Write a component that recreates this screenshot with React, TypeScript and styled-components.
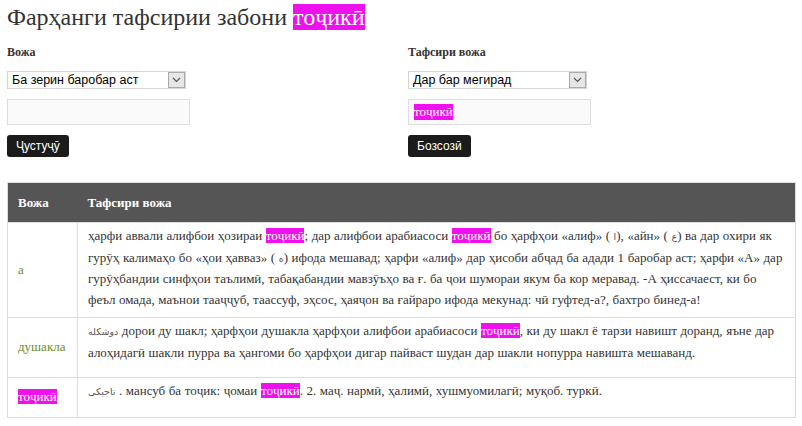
import styled, { createGlobalStyle } from 'styled-components';

const Global = createGlobalStyle`
  body {
    margin: 0;
    background: #fff;
    font-family: 'Liberation Serif', serif;
    color: #333;
  }
`;

const Page = styled.div`
  padding: 3px 6px 8px 7px;
`;

const Title = styled.h1`
  margin: 0;
  font-size: 24px;
  font-weight: normal;
  line-height: 28px;
  color: #333;
`;

const Mark = styled.span`
  background: #ee11ee;
  color: #fff;
`;

const Arabic = styled.span`
  font-family: 'DejaVu Sans', sans-serif;
  font-size: 9.5px;
  color: #555;
`;

const Forms = styled.div`
  display: grid;
  grid-template-columns: 401px 1fr;
  margin-top: 14px;
`;

const Field = styled.div`
  display: flex;
  flex-direction: column;
  align-items: flex-start;
`;

const Label = styled.div`
  font-weight: bold;
  font-size: 12px;
  line-height: 14px;
  color: #333;
  margin-bottom: 12px;
`;

const Select = styled.div`
  box-sizing: border-box;
  width: 179px;
  height: 18px;
  border: 1px solid #d4d4d4;
  display: flex;
  align-items: center;
  justify-content: space-between;
  font-family: 'Liberation Sans', Arial, sans-serif;
  font-size: 12.5px;
  color: #000;
  padding-left: 4px;
`;

const Arrow = styled.div`
  box-sizing: border-box;
  width: 17px;
  height: 16px;
  border: 1px solid #aaa;
  background: #e6e6e6;
  display: flex;
  align-items: center;
  justify-content: center;
`;

const Input = styled.div`
  box-sizing: border-box;
  margin-top: 10px;
  width: 183px;
  height: 26px;
  border: 1px solid #ddd;
  background: #fafafa;
  display: flex;
  align-items: center;
  padding-left: 5px;
  font-size: 13px;
`;

const Button = styled.div`
  margin-top: 10px;
  background: #1b1b1b;
  color: #fff;
  border-radius: 3px;
  font-family: 'Liberation Sans', Arial, sans-serif;
  font-size: 12px;
  padding: 0 9px;
  height: 22px;
  display: flex;
  align-items: center;
`;

const Table = styled.table`
  margin-top: 25px;
  width: 789px;
  border-collapse: collapse;
  border: 1px solid #ddd;
  font-size: 13px;
`;

const Th = styled.th`
  background: #555;
  color: #fff;
  text-align: left;
  font-weight: bold;
  font-size: 13px;
  height: 39px;
  padding: 0 10px;
`;

const Row = styled.tr<{ $h: number }>`
  height: ${({ $h }) => $h}px;
`;

const Td = styled.td<{ $word?: boolean }>`
  border: 1px solid #ddd;
  padding: ${({ $word }) => ($word ? '0 10px' : '3px 9px 4px 10px')};
  vertical-align: ${({ $word }) => ($word ? 'middle' : 'top')};
  line-height: 20.5px;
  word-spacing: ${({ $word }) => ($word ? '0' : '0.3px')};
  color: ${({ $word }) => ($word ? '#6b8e23' : '#333')};
  width: ${({ $word }) => ($word ? '49px' : 'auto')};
`;

const Chevron = () => (
  <svg width="9" height="6" viewBox="0 0 9 6">
    <path d="M1 1l3.5 3.5L8 1" fill="none" stroke="#555" strokeWidth="1.2" />
  </svg>
);

export default function App() {
  return (
    <Page>
      <Global />
      <Title>
        Фарҳанги тафсирии забони <Mark>тоҷикӣ</Mark>
      </Title>
      <Forms>
        <Field>
          <Label>Вожа</Label>
          <Select>
            Ба зерин баробар аст
            <Arrow>
              <Chevron />
            </Arrow>
          </Select>
          <Input />
          <Button>Ҷустуҷӯ</Button>
        </Field>
        <Field>
          <Label>Тафсири вожа</Label>
          <Select>
            Дар бар мегирад
            <Arrow>
              <Chevron />
            </Arrow>
          </Select>
          <Input>
            <Mark>тоҷикӣ</Mark>
          </Input>
          <Button>Бозсозӣ</Button>
        </Field>
      </Forms>
      <Table>
        <thead>
          <tr>
            <Th>Вожа</Th>
            <Th>Тафсири вожа</Th>
          </tr>
        </thead>
        <tbody>
          <Row $h={95}>
            <Td $word>а</Td>
            <Td>
              ҳарфи аввали алифбои ҳозираи <Mark>тоҷикӣ</Mark>; дар алифбои арабиасоси <Mark>тоҷикӣ</Mark> бо
              ҳарфҳои «алиф» ( <Arabic>ا</Arabic>), «айн» ( <Arabic>ع</Arabic>) ва дар охири як гурӯҳ
              калимаҳо бо «ҳои ҳавваз» ( <Arabic>ه</Arabic>) ифода мешавад; ҳарфи «алиф» дар ҳисоби абҷад
              ба адади 1 баробар аст; ҳарфи «А» дар гурӯҳбандии синфҳои таълимӣ, табақабандии мавзӯъҳо ва ғ.
              ба ҷои шумораи якум ба кор меравад. -А ҳиссачаест, ки бо феъл омада, маънои тааҷҷуб, таассуф,
              эҳсос, ҳаяҷон ва ғайраро ифода мекунад: чӣ гуфтед-а?, бахтро бинед-а!
            </Td>
          </Row>
          <Row $h={60}>
            <Td $word>душакла</Td>
            <Td>
              <Arabic>دوشکله</Arabic> дорои ду шакл; ҳарфҳои душакла ҳарфҳои алифбои арабиасоси{' '}
              <Mark>тоҷикӣ</Mark>, ки ду шакл ё тарзи навишт доранд, яъне дар алоҳидагӣ шакли пурра ва
              ҳангоми бо ҳарфҳои дигар пайваст шудан дар шакли нопурра навишта мешаванд.
            </Td>
          </Row>
          <Row $h={40}>
            <Td $word>
              <Mark>тоҷикӣ</Mark>
            </Td>
            <Td>
              <Arabic>تاجیکی</Arabic> . мансуб ба тоҷик: ҷомаи <Mark>тоҷикӣ</Mark>. 2. маҷ. нармӣ, ҳалимӣ,
              хушмуомилагӣ; муқоб. туркӣ.
            </Td>
          </Row>
        </tbody>
      </Table>
    </Page>
  );
}
